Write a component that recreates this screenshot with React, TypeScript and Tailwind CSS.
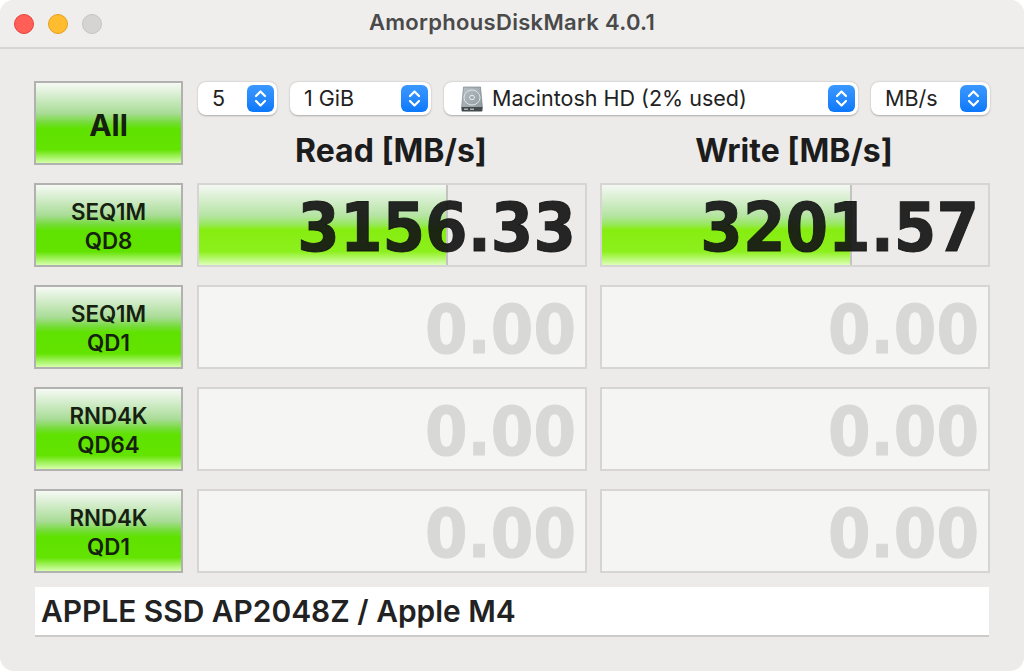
const num = "font-['DejaVu_Sans_Condensed','DejaVu_Sans',sans-serif] font-bold [-webkit-text-stroke:0.9px_currentColor]";
const ui = "font-['Inter','Liberation_Sans',sans-serif]";
const green = "bg-[linear-gradient(to_bottom,#f6faf5_0%,#a8dc96_38%,#72dc34_50%,#60e200_57%,#62e300_83%,#d6ffac_100%)]";

function Stepper() {
  return (
    <span className="flex h-[27px] w-[27px] shrink-0 items-center justify-center rounded-[6px] bg-gradient-to-b from-[#3a98ff] to-[#0a78fb]">
      <svg width="15" height="21" viewBox="0 0 15 21" fill="none" stroke="#fff" strokeWidth="2.2" strokeLinecap="round" strokeLinejoin="round">
        <path d="M3 8l4.5-4.5L12 8" />
        <path d="M3 13l4.5 4.5L12 13" />
      </svg>
    </span>
  );
}

function DiskIcon() {
  return (
    <svg width="26" height="26" viewBox="0 0 26 26" className="shrink-0">
      <defs>
        <linearGradient id="d" x1="0" y1="0" x2="1" y2="1">
          <stop offset="0" stopColor="#b8c2c6" />
          <stop offset="1" stopColor="#8e999e" />
        </linearGradient>
      </defs>
      <path d="M4.5 1h17l2 21H2.500z" fill="url(#d)" stroke="#6f787c" strokeWidth=".6" />
      <ellipse cx="13" cy="11.500" rx="8" ry="7.500" fill="none" stroke="#dfe5e7" strokeWidth="1" />
      <ellipse cx="13" cy="11.500" rx="2.500" ry="2.200" fill="none" stroke="#e8ecee" strokeWidth="1" />
      <rect x="2.500" y="21" width="21" height="4.500" rx="1" fill="#454a4d" />
      <rect x="5" y="22.500" width="4" height="1.500" fill="#aab1b4" />
      <rect x="11" y="22.500" width="4" height="1.500" fill="#aab1b4" />
    </svg>
  );
}

function Select({ label, className, icon }: { label: string; className: string; icon?: boolean }) {
  return (
    <div className={`flex h-[33px] shrink-0 items-center justify-between rounded-[8px] bg-white pr-[3px] shadow-[0_0.5px_2px_rgba(0,0,0,0.28)] ${className}`}>
      <span className="flex items-center gap-[7px]">
        {icon && <DiskIcon />}
        <span className={`${ui} text-[21.5px] leading-none text-[#222]`}>{label}</span>
      </span>
      <Stepper />
    </div>
  );
}

function TestButton({ lines }: { lines: string[] }) {
  return (
    <button className={`flex h-[84px] w-full flex-col items-center justify-center border-2 border-[#b1b1b0] pt-[2px] ${green} text-[#152010] ${ui} font-semibold`}>
      {lines.map((l) => (
        <span key={l} className="text-[22.3px] leading-[29px]">{l}</span>
      ))}
    </button>
  );
}

function Cell({ value, pct }: { value: string; pct?: number }) {
  const active = pct !== undefined;
  return (
    <div className={`relative flex h-[84px] items-center justify-end overflow-hidden border-2 border-[#d6d5d4] pr-[9px] pt-[6px] ${active ? "bg-[#ecebea]" : "bg-[#f5f5f4]"}`}>
      {active && (
        <div
          className="absolute inset-y-0 left-0 border-r-[2px] border-[#c3c3c1] bg-[linear-gradient(to_bottom,#f4f8f3_0%,#b6e4a4_38%,#98e860_49%,#86ed10_56%,#8cf01c_83%,#dcffb8_100%)]"
          style={{ width: `${pct}%` }}
        />
      )}
      <span className={`relative ${num} text-[68px] leading-none ${active ? "text-[rgba(20,20,20,0.92)]" : "text-[#d8d8d7]"}`}>{value}</span>
    </div>
  );
}

const rows: { lines: string[]; read: string; write: string; rp?: number; wp?: number }[] = [
  { lines: ["SEQ1M", "QD8"], read: "3156.33", write: "3201.57", rp: 64.4, wp: 64.8 },
  { lines: ["SEQ1M", "QD1"], read: "0.00", write: "0.00" },
  { lines: ["RND4K", "QD64"], read: "0.00", write: "0.00" },
  { lines: ["RND4K", "QD1"], read: "0.00", write: "0.00" },
];

export default function App() {
  return (
    <div className="h-[671px] w-[1024px] overflow-hidden bg-white">
      <div className="flex h-full flex-col overflow-hidden rounded-[14px] bg-[#ecebea]">
        <header className="relative flex h-[49px] shrink-0 items-center justify-center border-b-2 border-[#d6d5d4] bg-[#efeeed] pb-[2px]">
          <div className="absolute left-[14px] top-[14px] flex gap-[14px]">
            <span className="h-[20px] w-[20px] rounded-full border border-[#e5403a] bg-[#ff5f57]" />
            <span className="h-[20px] w-[20px] rounded-full border border-[#e3a11f] bg-[#febc2e]" />
            <span className="h-[20px] w-[20px] rounded-full border border-[#c4c3c2] bg-[#d5d4d3]" />
          </div>
          <span className={`${ui} text-[22px] font-semibold tracking-[0.3px] text-[#4a4a4a]`}>AmorphousDiskMark 4.0.1</span>
        </header>
        <main className="grid grid-cols-[149px_404px_403px] grid-rows-[84px_84px_84px_84px_84px] gap-y-[18px] pl-[34px] pt-[32px]">
          <button className={`flex h-[84px] w-full items-center justify-center border-2 border-[#b1b1b0] pt-[4px] ${green} text-[30px] font-bold text-[#152010] ${ui}`}>All</button>
          <div className="col-span-2 flex flex-col">
            <div className="ml-[15px] mt-[1px] flex gap-[13px]">
              <Select label="5" className="w-[79px] pl-[14px]" />
              <Select label="1 GiB" className="w-[141px] pl-[14px]" />
              <Select label="Macintosh HD (2% used)" className="w-[414px] pl-[15px]" icon />
              <Select label="MB/s" className="w-[119px] pl-[14px]" />
            </div>
            <div className={`mt-[16px] grid grid-cols-[404px_403px] ${ui} text-[32px] font-bold leading-[40px] text-[#1c1c1c]`}>
              <span className="ml-[12px] text-center">Read [MB/s]</span>
              <span className="ml-[11px] text-center">Write [MB/s]</span>
            </div>
          </div>
          {rows.map((r) => [
            <div key={r.lines.join() + "b"}><TestButton lines={r.lines} /></div>,
            <div key={r.lines.join() + "r"} className="ml-[14px]"><Cell value={r.read} pct={r.rp} /></div>,
            <div key={r.lines.join() + "w"} className="ml-[13px]"><Cell value={r.write} pct={r.wp} /></div>,
          ])}
        </main>
        <div className={`ml-[35px] mt-[14px] flex h-[50px] w-[954px] items-center border-b-2 border-[#cccbca] bg-white pl-[6px] ${ui} text-[29.9px] font-semibold text-[#222]`}>
          APPLE SSD AP2048Z / Apple M4
        </div>
      </div>
    </div>
  );
}
